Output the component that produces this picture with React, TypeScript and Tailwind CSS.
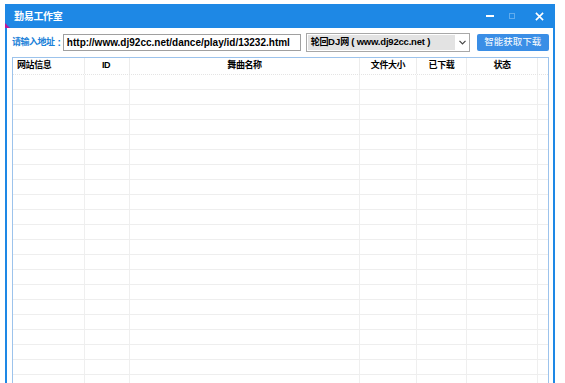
import React from 'react';

const cols = [
    { label: '网站信息', w: 'w-[72px]', align: 'justify-start pl-[4px]' },
    { label: 'ID', w: 'w-[45px]', align: 'justify-start pl-[17px]' },
    { label: '舞曲名称', w: 'w-[230px]', align: 'justify-center' },
    { label: '文件大小', w: 'w-[57px]', align: 'justify-center' },
    { label: '已下载', w: 'w-[50px]', align: 'justify-center' },
    { label: '状态', w: 'w-[71px]', align: 'justify-center' },
];

const rows = Array.from({ length: 22 }, (_, i) => i);

const cjk = { fontFamily: '"Liberation Sans", "Noto Sans CJK SC", sans-serif' };

export default function App() {
    return (
        <div className="w-[565px] h-[383px] bg-white overflow-hidden pl-[5px] pt-[4px] pr-[10px]" style={cjk}>
            <div className="relative h-[420px] flex flex-col border-x-2 border-[#1e88e5] bg-white">
                {/* title bar */}
                <div className="relative h-[24px] -mx-[2px] bg-[#1e88e5] flex items-center pl-[9px] pr-[11px]">
                    <span className="text-white text-[10px] font-bold tracking-[-0.3px]">勤易工作室</span>
                    <div className="ml-auto flex items-center gap-[15px]">
                        <span className="block w-[8px] h-[2px] bg-white" />
                        <span className="block w-[6px] h-[6px] border border-white/30" />
                        <svg width="9" height="9" viewBox="0 0 10 10" className="ml-[5px]">
                            <path d="M1 1 L9 9 M9 1 L1 9" stroke="white" strokeWidth="1.8" />
                        </svg>
                    </div>
                    <div className="absolute left-0 bottom-0 w-0 h-0 border-l-[5px] border-l-[#c0169a] border-t-[5px] border-t-transparent" />
                </div>

                {/* address row */}
                <div className="flex items-center h-[29px] pl-[5px] pr-[4px]">
                    <span className="text-[9px] text-[#1a7fd8] font-bold whitespace-nowrap tracking-[-0.5px]">请输入地址</span>
                    <span className="text-[10px] text-[#1a7fd8] font-bold ml-[3px]">:</span>
                    <div className="ml-[2px] w-[238px] h-[17px] border border-[#a0a0a0] flex items-center pl-[3px]">
                        <span className="text-[10px] font-bold text-black whitespace-nowrap">http://www.dj92cc.net/dance/play/id/13232.html</span>
                    </div>
                    <div className="ml-[5px] w-[164px] h-[19px] border border-[#a8a8a8] flex items-stretch">
                        <div className="flex-1 bg-[#e3e3e3] m-[1px] flex items-center pl-[3px]">
                            <span className="text-[9px] font-bold text-black whitespace-nowrap tracking-[-0.4px]">轮回</span>
                            <span className="text-[9.5px] font-bold text-black whitespace-nowrap">DJ</span>
                            <span className="text-[9px] font-bold text-black whitespace-nowrap">网</span>
                            <span className="text-[9.5px] font-bold text-black whitespace-nowrap ml-[2px] tracking-[-0.2px]">( www.dj92cc.net )</span>
                        </div>
                        <div className="w-[13px] flex items-center justify-center">
                            <svg width="7" height="5" viewBox="0 0 7 5">
                                <path d="M0.5 0.8 L3.5 3.8 L6.5 0.8" stroke="#444" strokeWidth="1.2" fill="none" />
                            </svg>
                        </div>
                    </div>
                    <div className="ml-[7px] w-[72px] h-[17px] rounded-[2px] bg-[#3a8ee6] flex items-center justify-center">
                        <span className="text-[9.5px] text-white whitespace-nowrap">智能获取下载</span>
                    </div>
                </div>

                {/* table */}
                <div className="ml-[5px] mr-[4px] flex-1 border border-[#9cc3ec] bg-white overflow-hidden">
                    <div className="flex h-[17px] border-b border-dotted border-[#e4e4e4]">
                        {cols.map((c) => (
                            <div key={c.label} className={`${c.w} ${c.align} flex items-center border-r border-[#ececec] shrink-0`}>
                                <span className="text-[9px] font-bold text-black tracking-[-0.4px]">{c.label}</span>
                            </div>
                        ))}
                        <div className="flex-1" />
                    </div>
                    {rows.map((r) => (
                        <div key={r} className="flex h-[15px] border-b border-[#eeeeee]">
                            {cols.map((c) => (
                                <div key={c.label} className={`${c.w} border-r border-[#efefef] shrink-0`} />
                            ))}
                            <div className="flex-1" />
                        </div>
                    ))}
                </div>
            </div>
        </div>
    );
}
